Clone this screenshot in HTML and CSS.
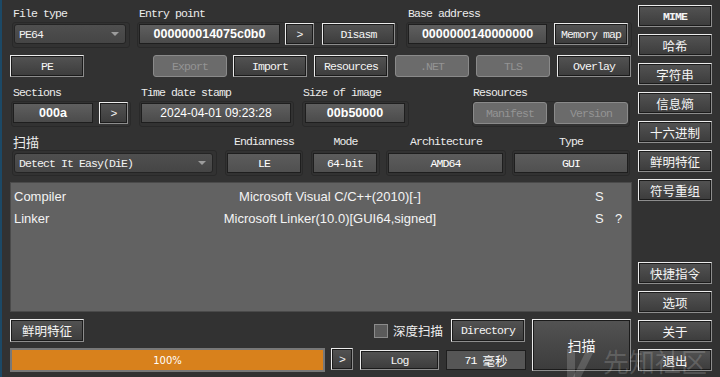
FILE: index.html
```html
<!DOCTYPE html>
<html lang="zh">
<head>
    <meta charset="UTF-8">
    <title>Detect It Easy</title>
    <link rel="stylesheet" href="styles.css">
</head>
<body>
    <div class="window">
        <div class="main">
            <div class="row row-1">
                <div class="group grp-type">
                    <div class="lbl">File type</div>
                    <div class="frame">
                        <div class="combo combo-type">PE64<i class="arrow"></i></div>
                    </div>
                </div>
                <div class="group grp-entry">
                    <div class="lbl">Entry point</div>
                    <div class="frame">
                        <div class="val val-entry">000000014075c0b0</div>
                        <div class="btn btn-go">&gt;</div>
                        <div class="btn btn-disasm">Disasm</div>
                    </div>
                </div>
                <div class="group grp-base">
                    <div class="lbl">Base address</div>
                    <div class="frame">
                        <div class="val val-base">0000000140000000</div>
                        <div class="btn btn-mmap">Memory map</div>
                    </div>
                </div>
            </div>

            <div class="row row-2">
                <div class="btn">PE</div>
                <div class="btn off">Export</div>
                <div class="btn">Import</div>
                <div class="btn">Resources</div>
                <div class="btn off">.NET</div>
                <div class="btn off">TLS</div>
                <div class="btn">Overlay</div>
            </div>

            <div class="row row-3">
                <div class="group grp-sections">
                    <div class="lbl">Sections</div>
                    <div class="frame">
                        <div class="val val-sections">000a</div>
                        <div class="btn btn-go">&gt;</div>
                    </div>
                </div>
                <div class="group grp-time">
                    <div class="lbl">Time date stamp</div>
                    <div class="frame">
                        <div class="val val-plain val-time">2024-04-01 09:23:28</div>
                    </div>
                </div>
                <div class="group grp-size">
                    <div class="lbl">Size of image</div>
                    <div class="frame">
                        <div class="val val-size">00b50000</div>
                    </div>
                </div>
                <div class="group grp-res">
                    <div class="lbl">Resources</div>
                    <div class="frame">
                        <div class="btn off">Manifest</div>
                        <div class="btn off btn-version">Version</div>
                    </div>
                </div>
            </div>

            <div class="row row-4">
                <div class="group grp-scan">
                    <div class="lbl lbl-cjk">扫描</div>
                    <div class="frame">
                        <div class="combo combo-scan">Detect It Easy(DiE)<i class="arrow"></i></div>
                    </div>
                </div>
                <div class="group grp-endian centered">
                    <div class="lbl">Endianness</div>
                    <div class="frame">
                        <div class="val val-mono val-endian">LE</div>
                    </div>
                </div>
                <div class="group grp-mode centered">
                    <div class="lbl">Mode</div>
                    <div class="frame">
                        <div class="val val-mono val-mode">64-bit</div>
                    </div>
                </div>
                <div class="group grp-arch centered">
                    <div class="lbl">Architecture</div>
                    <div class="frame">
                        <div class="val val-mono val-arch">AMD64</div>
                    </div>
                </div>
                <div class="group grp-kind centered">
                    <div class="lbl">Type</div>
                    <div class="frame">
                        <div class="val val-mono val-kind">GUI</div>
                    </div>
                </div>
            </div>

            <div class="results">
                <div class="res-row">
                    <span class="c-name">Compiler</span>
                    <span class="c-val">Microsoft Visual C/C++(2010)[-]</span>
                    <span class="c-s">S</span>
                    <span class="c-q"></span>
                </div>
                <div class="res-row">
                    <span class="c-name">Linker</span>
                    <span class="c-val">Microsoft Linker(10.0)[GUI64,signed]</span>
                    <span class="c-s">S</span>
                    <span class="c-q">?</span>
                </div>
            </div>

            <div class="bottom">
                <div class="bottom-left">
                    <div class="bl-top">
                        <div class="btn btn-cjk btn-feature">鲜明特征</div>
                        <label class="deep">
                            <span class="chk"></span>
                            <span class="deep-text">深度扫描</span>
                        </label>
                        <div class="btn btn-dir">Directory</div>
                    </div>
                    <div class="bl-bottom">
                        <div class="progress">100%</div>
                        <div class="btn btn-go btn-next">&gt;</div>
                        <div class="btn btn-log">Log</div>
                        <div class="val val-mono val-ms">71 <span class="cjk">毫秒</span></div>
                    </div>
                </div>
                <div class="btn btn-cjk btn-scan">扫描</div>
            </div>
        </div>

        <div class="side">
            <div class="btn btn-mime">MIME</div>
            <div class="btn btn-cjk">哈希</div>
            <div class="btn btn-cjk">字符串</div>
            <div class="btn btn-cjk">信息熵</div>
            <div class="btn btn-cjk">十六进制</div>
            <div class="btn btn-cjk">鲜明特征</div>
            <div class="btn btn-cjk">符号重组</div>
            <div class="btn btn-cjk push">快捷指令</div>
            <div class="btn btn-cjk">选项</div>
            <div class="btn btn-cjk">关于</div>
            <div class="btn btn-cjk">退出</div>
        </div>
    </div>

    <div class="watermark">
        <svg class="wm-logo" width="28" height="34" viewBox="0 0 28 34">
            <path d="M0 2 H8 V34 H0 Z" fill="currentColor"/>
            <path d="M20 2 H28 L12 34 H4 Z" fill="currentColor"/>
        </svg>
        <span class="wm-text">先知社区</span>
    </div>
</body>
</html>
```

FILE: styles.css
```css
* {
    margin: 0;
    padding: 0;
    box-sizing: border-box;
}

html, body {
    height: 100%;
}

body {
    background: #323232;
    color: #f0f0f0;
    font-family: "Liberation Mono", monospace;
    font-size: 11.5px;
    letter-spacing: -0.9px;
    box-shadow: inset 2px 0 0 #1c4966;
    overflow: hidden;
    position: relative;
}

.window {
    display: flex;
    padding-left: 10px;
}

.main {
    width: 622px;
    padding-top: 5px;
}

.side {
    width: 74px;
    margin-left: 6px;
    padding-top: 5px;
    display: flex;
    flex-direction: column;
    gap: 7px;
}

.cjk,
.lbl-cjk,
.btn-cjk,
.deep-text {
    font-family: "Noto Sans CJK SC", sans-serif;
    letter-spacing: 0;
}

/* rows and groups */

.row {
    display: flex;
    align-items: flex-start;
}

.row-2 { margin-top: 7px; }
.row-3 { margin-top: 7px; }
.row-4 { margin-top: 6px; }

.lbl {
    height: 17px;
    line-height: 17px;
    padding-left: 2px;
    white-space: nowrap;
    color: #ececec;
}

.lbl-cjk {
    font-size: 13px;
    padding-left: 1px;
}

.centered .lbl {
    text-align: center;
    padding-left: 0;
}

.frame {
    height: 26px;
    border: 1px solid #292929;
    border-radius: 3px;
    display: flex;
    align-items: flex-start;
}

.frame > .val {
    margin-top: 1px;
}

.row-4 .frame > * {
    margin-top: 2px;
}

/* widgets */

.val {
    height: 20px;
    border: 1px solid #1e1e1e;
    background: linear-gradient(#5f5f5f, #4b4b4b);
    display: flex;
    align-items: center;
    justify-content: center;
    font-family: "Liberation Sans", sans-serif;
    font-weight: bold;
    font-size: 12.5px;
    letter-spacing: 0;
    color: #fff;
    white-space: nowrap;
}

.val-plain {
    font-weight: normal;
    font-size: 12px;
}

.val-mono {
    font-family: "Liberation Mono", monospace;
    font-weight: normal;
    font-size: 11.5px;
    letter-spacing: -0.9px;
    background: linear-gradient(#5c5c5c, #505050);
}

.combo {
    height: 20px;
    border: 1px solid #242424;
    border-radius: 3px;
    background: linear-gradient(#4f4f4f, #454545);
    display: flex;
    align-items: center;
    padding-left: 4px;
    color: #f2f2f2;
    white-space: nowrap;
    margin-top: 1px;
}

.arrow {
    margin-left: auto;
    margin-right: 6px;
    border-left: 4px solid transparent;
    border-right: 4px solid transparent;
    border-top: 4px solid #9c9c9c;
}

.btn {
    height: 22px;
    border: 1px solid;
    border-color: #ececec #8d8d8d #8d8d8d #ececec;
    box-shadow: inset 0 0 0 1px #1b1b1b;
    background: linear-gradient(#535353, #3c3c3c);
    color: #f5f5f5;
    display: flex;
    align-items: center;
    justify-content: center;
    white-space: nowrap;
}

.btn.off {
    border: 1px solid #8a8a8a;
    border-radius: 3px;
    box-shadow: none;
    background: #6b6b6b;
    color: #949494;
}

.btn-cjk {
    font-size: 12.5px;
}

.btn-mime {
    font-weight: bold;
}

/* row 1 */

.grp-type { margin-left: 2px; width: 118px; }
.grp-type .lbl { padding-left: 1px; }
.combo-type { margin-left: 1px; width: 112px; }

.grp-entry { margin-left: 7px; width: 261px; }
.val-entry { margin-left: 1px; width: 141px; }
.btn-go { margin-left: 5px; width: 29px; }
.btn-disasm { margin-left: 8px; width: 73px; }

.grp-base { margin-left: 8px; width: 226px; }
.val-base { margin-left: 1px; width: 139px; }
.btn-mmap { margin-left: 7px; width: 74px; }

/* row 2 */

.row-2 .btn {
    width: 74px;
    margin-left: 7px;
}

.row-2 .btn:first-child { margin-left: 0; }
.row-2 .btn:nth-child(2) { margin-left: 69px; }
.row-2 .btn:nth-child(3) { margin-left: 6px; }

/* row 3 */

.grp-sections { margin-left: 1px; width: 120px; }
.val-sections { margin-left: 1px; width: 80px; }
.grp-sections .btn-go { margin-left: 6px; }

.grp-time { margin-left: 8px; width: 155px; }
.val-time { margin-left: 1px; width: 150px; }

.grp-size { margin-left: 8px; width: 107px; }
.grp-size .lbl { padding-left: 1px; }
.val-size { margin-left: 2px; width: 100px; }

.grp-res { margin-left: 63px; width: 158px; }
.grp-res .lbl { padding-left: 1px; }
.grp-res .btn { width: 74px; }
.grp-res .btn-version { margin-left: 7px; }

/* row 4 */

.grp-scan { margin-left: 2px; width: 205px; }
.combo-scan { margin-left: 1px; width: 199px; }

.grp-endian { margin-left: 8px; width: 78px; }
.val-endian { margin-left: 1px; width: 74px; }

.grp-mode { margin-left: 8px; width: 69px; }
.val-mode { margin-left: 1px; width: 64px; }

.grp-arch { margin-left: 6px; width: 120px; }
.val-arch { margin-left: 1px; width: 115px; }

.grp-kind { margin-left: 6px; width: 118px; }
.val-kind { margin-left: 1px; width: 114px; }

/* results */

.results {
    margin-top: 6px;
    height: 130px;
    background: #626262;
    border: 1px solid #4a4a4a;
    padding: 2px 0 0 3px;
    font-family: "Liberation Sans", sans-serif;
    font-size: 13px;
    letter-spacing: 0;
    color: #f4f4f4;
}

.res-row {
    display: flex;
    height: 22px;
    align-items: center;
    white-space: nowrap;
}

.c-name { width: 100px; }
.c-val { width: 432px; text-align: center; }
.c-s { width: 12px; margin-left: 49px; }
.c-q { width: 12px; margin-left: 8px; }

/* bottom */

.bottom {
    display: flex;
    margin-top: 7px;
}

.bottom-left {
    width: 516px;
}

.bl-top {
    display: flex;
    align-items: center;
    height: 23px;
}

.btn-feature {
    width: 74px;
    height: 23px;
}

.deep {
    margin-left: auto;
    display: flex;
    align-items: center;
}

.chk {
    width: 14px;
    height: 14px;
    background: #5b5b5b;
    border: 1px solid #8b8b8b;
}

.deep-text {
    margin-left: 5px;
    font-size: 12.5px;
    color: #f0f0f0;
}

.btn-dir {
    margin-left: 8px;
    margin-right: 1px;
    width: 74px;
    height: 23px;
}

.bl-bottom {
    display: flex;
    align-items: flex-start;
    margin-top: 6px;
}

.progress {
    width: 315px;
    height: 24px;
    border: 2px solid #787878;
    background: #d8811c;
    display: flex;
    align-items: center;
    justify-content: center;
    font-family: "DejaVu Sans", sans-serif;
    font-size: 10px;
    letter-spacing: 0;
    color: #fff;
}

.btn-next {
    margin-left: 6px;
    width: 22px;
}

.btn-log {
    margin-left: 7px;
    margin-top: 2px;
    width: 79px;
    height: 20px;
}

.val-ms {
    margin-left: 7px;
    margin-top: 2px;
    width: 80px;
    background: #565656;
    white-space: pre;
}

.val-ms .cjk {
    font-size: 12.5px;
}

.btn-scan {
    margin-left: 6px;
    width: 99px;
    height: 52px;
    font-size: 14px;
}

.side .btn {
    width: 74px;
}

.side .push {
    margin-top: 54px;
}

/* site watermark over the corner */

.watermark {
    position: absolute;
    left: 567px;
    top: 344px;
    display: flex;
    align-items: flex-start;
    color: rgba(255, 255, 255, 0.16);
    pointer-events: none;
}

.wm-logo {
    margin-top: 3px;
}

.wm-text {
    margin-left: 8px;
    font-family: "Noto Sans CJK SC", sans-serif;
    font-size: 26px;
    line-height: 34px;
    letter-spacing: 0;
}
```
